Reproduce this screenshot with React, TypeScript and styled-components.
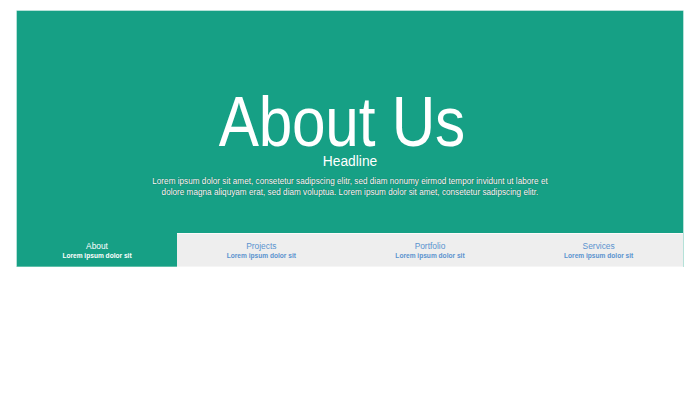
import React from "react";
import styled, { createGlobalStyle } from "styled-components";

const GlobalStyle = createGlobalStyle`
  html, body {
    margin: 0;
    padding: 0;
    background: #ffffff;
    font-family: "Liberation Sans", Arial, sans-serif;
  }
`;

const tabs = [
  { title: "About", sub: "Lorem ipsum dolor sit" },
  { title: "Projects", sub: "Lorem ipsum dolor sit" },
  { title: "Portfolio", sub: "Lorem ipsum dolor sit" },
  { title: "Services", sub: "Lorem ipsum dolor sit" },
];

const App: React.FC = () => {
  const active = 0;

  return (
    <>
      <GlobalStyle />
      <Wrap>
        <Hero>
          <Title>About Us</Title>
          <Headline>Headline</Headline>
          <Intro>
            Lorem ipsum dolor sit amet, consetetur sadipscing elitr, sed diam nonumy eirmod tempor invidunt ut labore et
            <br />
            dolore magna aliquyam erat, sed diam voluptua. Lorem ipsum dolor sit amet, consetetur sadipscing elitr.
          </Intro>
        </Hero>
        <TabBar>
          {tabs.map((t, i) => (
            <Tab key={t.title} $active={i === active}>
              <TabTitle>{t.title}</TabTitle>
              <TabSub>{t.sub}</TabSub>
            </Tab>
          ))}
        </TabBar>
      </Wrap>
    </>
  );
};

const Wrap = styled.div`
  width: 666px;
  margin: 11px 0 0 17px;
  background: #16a085;
  box-shadow: 0 0 0 0.5px #6cc4b2;
`;

const Hero = styled.div`
  box-sizing: border-box;
  display: flex;
  flex-direction: column;
  align-items: center;
  padding-top: 82px;
  height: 222px;
  color: #ffffff;
`;

const Title = styled.h1`
  margin: 0 16px 0 0;
  font-weight: normal;
  font-size: 71px;
  line-height: 58px;
  letter-spacing: -0.3px;
  transform: scaleX(0.85);
  white-space: nowrap;
`;

const Headline = styled.h2`
  margin: 3px 0 0;
  font-weight: normal;
  font-size: 13.8px;
  line-height: 16px;
`;

const Intro = styled.p`
  margin: 6px 0 0;
  text-align: center;
  white-space: nowrap;
  font-size: 8.2px;
  line-height: 11px;
  text-shadow: 0 0 1px rgba(0, 0, 0, 0.6);
`;

const TabBar = styled.div`
  display: grid;
  grid-template-columns: 160px 1fr 1fr 1fr;
  height: 34px;
  background: #eeeeee;
`;

const Tab = styled.div<{ $active: boolean }>`
  box-sizing: border-box;
  display: flex;
  flex-direction: column;
  align-items: center;
  gap: 1px;
  padding-top: 7px;
  background: ${(p) => (p.$active ? "#16a085" : "#eeeeee")};
  color: ${(p) => (p.$active ? "#ffffff" : "#5a93cf")};
  border-top: 1px solid ${(p) => (p.$active ? "#16a085" : "#fafafa")};
  border-bottom: 1px solid ${(p) => (p.$active ? "#5ec0a9" : "#f5f5f5")};
`;

const TabTitle = styled.span`
  font-size: 8.4px;
  line-height: 10px;
`;

const TabSub = styled.span`
  font-size: 6.6px;
  line-height: 8px;
  font-weight: bold;
`;

export default App;
